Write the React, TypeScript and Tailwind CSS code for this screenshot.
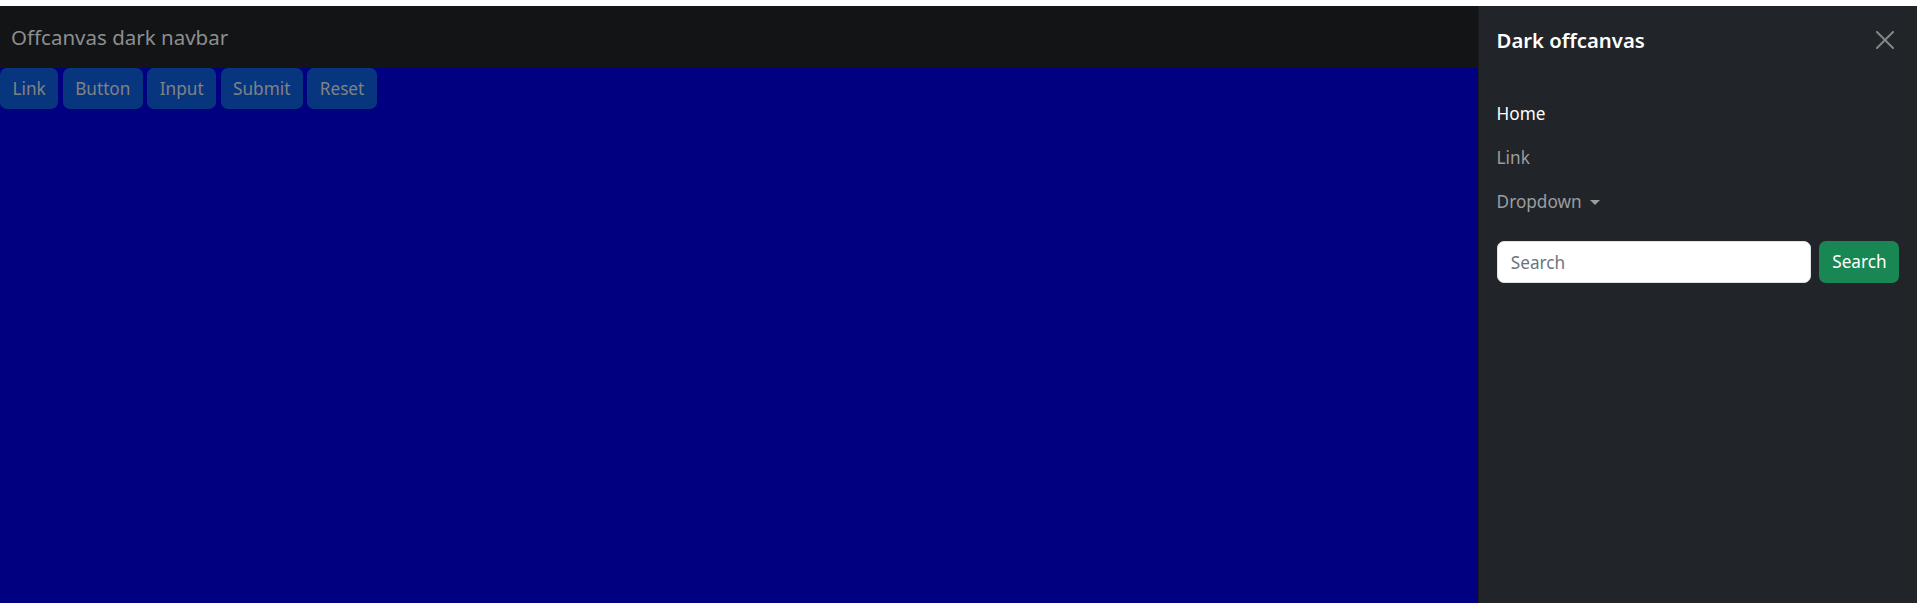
const buttons = ['Link', 'Button', 'Input', 'Submit', 'Reset']

const navLinks = [
  { label: 'Home', active: true },
  { label: 'Link', active: false },
]

export default function App() {
  return (
    <div className="min-h-screen bg-white pt-[6px] font-['Segoe_UI','Noto_Sans',sans-serif]">
      <div className="flex h-[597px]">
        <main className="flex-1 bg-[#000080]">
          <nav className="flex h-[62px] items-center bg-[#131415] px-[11px]">
            <span className="text-[20.5px] leading-[33px] text-[#8d8e8f]">Offcanvas dark navbar</span>
          </nav>
          <div className="flex gap-[4.4px]">
            {buttons.map((b) => (
              <button
                key={b}
                className="h-[41px] rounded-[7px] bg-[#08367e] px-[12.5px] text-[17.2px] leading-[26px] text-[#808386]"
              >
                {b}
              </button>
            ))}
          </div>
        </main>

        <aside className="flex w-[439px] flex-col border-l border-black/30 bg-[#212529] text-white">
          <div className="flex items-center justify-between p-[17.6px]">
            <h5 className="text-[20.3px] font-semibold leading-[33px]">Dark offcanvas</h5>
            <button className="mr-[1px] flex h-[26px] w-[26px] items-center justify-center">
              <svg width="18" height="18" viewBox="0 0 18 18" stroke="#848586" strokeWidth="2" strokeLinecap="square">
                <path d="M1 1L17 17M17 1L1 17" />
              </svg>
            </button>
          </div>

          <div className="p-[17.6px]">
            <ul className="flex flex-col">
              {navLinks.map((l) => (
                <li key={l.label}>
                  <a className={`block py-[8.8px] text-[17.2px] leading-[26.4px] ${l.active ? 'text-white' : 'text-[#9b9d9f]'}`}>
                    {l.label}
                  </a>
                </li>
              ))}
              <li>
                <a className="flex items-center py-[8.8px] text-[17.2px] leading-[26.4px] text-[#9b9d9f]">
                  Dropdown
                  <span className="ml-[8px] mt-[1px] h-0 w-0 border-x-[5px] border-t-[5.5px] border-x-transparent border-t-[#9b9d9f]" />
                </a>
              </li>
            </ul>

            <form className="mt-[17.6px] flex gap-[8.8px]">
              <input
                placeholder="Search"
                className="h-[42px] flex-1 rounded-[7px] border border-[#dee2e6] bg-white px-[13.2px] text-[17.2px] text-[#212529] placeholder:text-[#6c757d] outline-none"
              />
              <button type="button" className="h-[42px] w-[80px] rounded-[7px] bg-[#198754] text-[17.2px] text-white">
                Search
              </button>
            </form>
          </div>
        </aside>
      </div>
    </div>
  )
}
